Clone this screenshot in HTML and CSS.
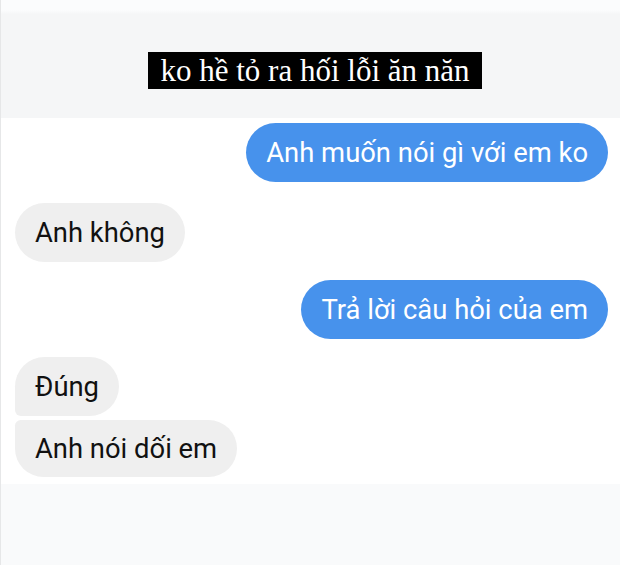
FILE: index.html
```html
<!DOCTYPE html>
<html lang="vi">
<head>
<meta charset="utf-8">
<title>Chat</title>
<link rel="stylesheet" href="styles.css">
</head>
<body>
<div class="page">
  <header class="header">
    <div class="caption">ko hề tỏ ra hối lỗi ăn năn</div>
  </header>
  <main class="chat">
    <div class="msg out first">Anh muốn nói gì với em ko</div>
    <div class="msg in gap">Anh không</div>
    <div class="msg out gap3">Trả lời câu hỏi của em</div>
    <div class="msg in gap3 group-top">Đúng</div>
    <div class="msg in gap-sm group-bottom">Anh nói dối em</div>
  </main>
  <footer class="footer"></footer>
</div>
</body>
</html>
```
FILE: styles.css
```css
html, body {
  margin: 0;
  padding: 0;
  background: #f9fafb;
}
.page {
  width: 620px;
  height: 565px;
  display: flex;
  flex-direction: column;
  border-left: 1px solid #e6e7e8;
  box-sizing: border-box;
}
.header {
  height: 118px;
  background: linear-gradient(#fbfcfd 0, #fbfcfd 10px, #f5f6f7 14px, #f5f6f7 100%);
  display: flex;
  justify-content: center;
  padding-top: 52px;
  padding-left: 9px;
  box-sizing: border-box;
}
.caption {
  align-self: flex-start;
  background: #000;
  color: #fff;
  font-family: "Liberation Serif", "Times New Roman", serif;
  font-size: 31px;
  height: 37px;
  line-height: 38px;
  padding: 0 12px;
}
.chat {
  height: 366px;
  background: #fff;
  display: flex;
  flex-direction: column;
  padding: 5px 12px 0 14px;
  box-sizing: border-box;
}
.msg {
  height: 59px;
  line-height: 60px;
  padding: 0 20px;
  border-radius: 30px;
  font-family: Roboto, "Liberation Sans", Arial, sans-serif;
  font-size: 27.4px;
  white-space: nowrap;
}
.out {
  align-self: flex-end;
  background: #4792ec;
  color: #fff;
}
.in {
  align-self: flex-start;
  background: #efefef;
  color: #111;
}
.gap { margin-top: 21px; }
.gap3 { margin-top: 18px; }
.gap-sm { margin-top: 4px; }
.group-top { border-bottom-left-radius: 6px; }
.group-bottom { border-top-left-radius: 6px; height: 57px; line-height: 58px; }
.footer {
  flex: 1;
  background: #f9fafb;
}
```
